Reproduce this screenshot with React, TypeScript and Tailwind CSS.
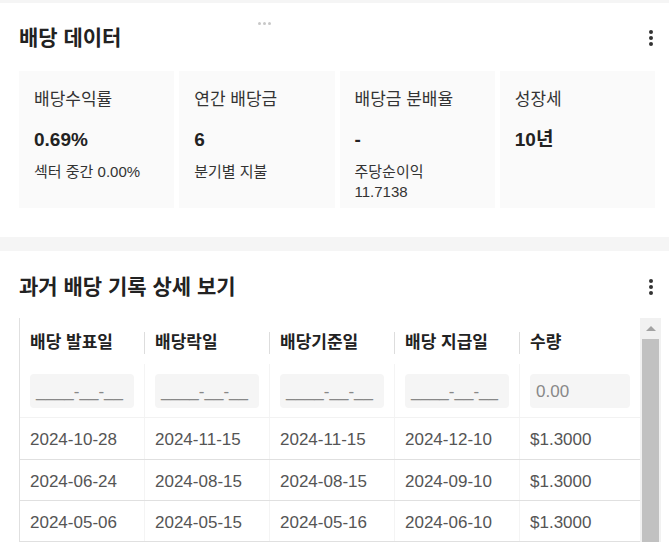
import React from "react";

type Stat = { label: string; value: string; sub?: string[] };

const stats: Stat[] = [
  { label: "배당수익률", value: "0.69%", sub: ["섹터 중간 0.00%"] },
  { label: "연간 배당금", value: "6", sub: ["분기별 지불"] },
  { label: "배당금 분배율", value: "-", sub: ["주당순이익", "11.7138"] },
  { label: "성장세", value: "10년" },
];

const headers = ["배당 발표일", "배당락일", "배당기준일", "배당 지급일", "수량"];

const rows = [
  ["2024-10-28", "2024-11-15", "2024-11-15", "2024-12-10", "$1.3000"],
  ["2024-06-24", "2024-08-15", "2024-08-15", "2024-09-10", "$1.3000"],
  ["2024-05-06", "2024-05-15", "2024-05-16", "2024-06-10", "$1.3000"],
];

const colW = ["w-[125px]", "w-[125px]", "w-[125px]", "w-[125px]", "w-[120px]"];

function Kebab() {
  return (
    <div className="flex h-6 w-6 flex-col items-center justify-center gap-[2.5px]">
      <span className="h-[3.5px] w-[3.5px] rounded-full bg-[#333]" />
      <span className="h-[3.5px] w-[3.5px] rounded-full bg-[#333]" />
      <span className="h-[3.5px] w-[3.5px] rounded-full bg-[#333]" />
    </div>
  );
}

export default function App() {
  return (
    <div
      className="h-[542px] w-[669px] overflow-hidden bg-[#f5f5f5] pt-[3px] text-[#222]"
      style={{ fontFamily: '"Liberation Sans", "Noto Sans CJK KR", sans-serif' }}
    >
      {/* 배당 데이터 */}
      <section className="relative h-[234px] bg-white px-[19px] pt-[21px]">
        <div className="absolute left-[258px] top-[19px] flex gap-[2px]">
          <span className="h-[3px] w-[3px] rounded-full bg-[#c8c8c8]" />
          <span className="h-[3px] w-[3px] rounded-full bg-[#c8c8c8]" />
          <span className="h-[3px] w-[3px] rounded-full bg-[#c8c8c8]" />
        </div>
        <div className="flex items-center justify-between">
          <h2 className="text-[21px] font-bold leading-[28px]">배당 데이터</h2>
          <div className="-mr-[13px]">
            <Kebab />
          </div>
        </div>
        <div className="mt-[19px] grid w-[636px] grid-cols-4 gap-[5px]">
          {stats.map((s) => (
            <div key={s.label} className="h-[137px] bg-[#fafafa] px-[15px] pt-[17px]">
              <p className="text-[17px] leading-[24px] text-[#333]">{s.label}</p>
              <p className="mt-[16px] text-[19px] font-bold leading-[24px]">{s.value}</p>
              {s.sub && (
                <div className="mt-[10px] text-[15px] leading-[20px] text-[#333]">
                  {s.sub.map((t) => (
                    <p key={t}>{t}</p>
                  ))}
                </div>
              )}
            </div>
          ))}
        </div>
      </section>

      {/* 과거 배당 기록 */}
      <section className="mt-[14px] bg-white pl-[19px] pt-[22px]">
        <div className="flex items-center justify-between pr-[6px]">
          <h2 className="text-[21px] font-bold leading-[28px]">과거 배당 기록 상세 보기</h2>
          <Kebab />
        </div>
        <div className="mt-[17px] flex">
          <div className="border-l border-[#e0e0e0]">
            {/* header */}
            <div className="flex h-[46px] pt-[4px]">
              {headers.map((h, i) => (
                <div
                  key={h}
                  className={`${colW[i]} flex items-center justify-between pl-[10px] text-[17px] font-bold`}
                >
                  <span>{h}</span>
                  {i < headers.length - 1 && <span className="h-[22px] w-px bg-[#ddd]" />}
                </div>
              ))}
            </div>
            {/* filters */}
            <div className="flex h-[54px] border-b border-[#f2f2f2]">
              {headers.map((h, i) => (
                <div
                  key={h}
                  className={`${colW[i]} flex items-center border-r border-[#f4f4f4] px-[10px] last:border-r-0`}
                >
                  <div className="flex h-[34px] w-full items-center rounded-[4px] bg-[#f5f5f5] pl-[6px] pt-[2px] text-[17px] text-[#888]">
                    {i < 4 ? "____-__-__" : "0.00"}
                  </div>
                </div>
              ))}
            </div>
            {/* rows */}
            {rows.map((r, ri) => (
              <div
                key={ri}
                className={`flex ${ri === 0 ? "h-[42px]" : "h-[41px]"} border-b border-[#e0e0e0]`}
              >
                {r.map((c, i) => (
                  <div
                    key={i}
                    className={`${colW[i]} flex items-center border-r border-[#f4f4f4] pl-[10px] pt-[3px] text-[17px] text-[#555] last:border-r-0`}
                  >
                    {c}
                  </div>
                ))}
              </div>
            ))}
          </div>
          {/* scrollbar */}
          <div className="flex h-[240px] w-[21px] flex-col items-center bg-[#f1f1f1] px-[2px]">
            <div className="flex h-[21px] items-center justify-center">
              <span className="h-0 w-0 border-x-[5px] border-b-[5px] border-x-transparent border-b-[#a3a3a3]" />
            </div>
            <div className="w-[17px] flex-1 bg-[#c1c1c1]" />
          </div>
        </div>
      </section>
    </div>
  );
}
